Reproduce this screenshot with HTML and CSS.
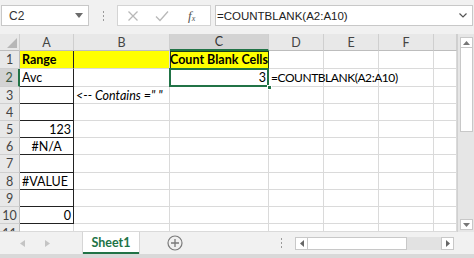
FILE: index.html
```html
<!DOCTYPE html>
<html>
<head>
<meta charset="utf-8">
<link rel="stylesheet" href="styles.css">
</head>
<body>
<div class="app">
  <div class="fbar">
    <div class="namebox"><span>C2</span><svg class="dd" width="8" height="5" viewBox="0 0 8 5"><path d="M0 0h8L4 5z" fill="#6b6b6b"/></svg></div>
    <div class="vdots"><i></i><i></i><i></i></div>
    <div class="btns">
      <svg width="12" height="12" viewBox="0 0 12 12"><path d="M1.5 1.5l9 9M10.5 1.5l-9 9" stroke="#b8b8b8" stroke-width="1.3"/></svg>
      <svg width="14" height="12" viewBox="0 0 14 12"><path d="M1 6.5l4 4L13 1.5" stroke="#b8b8b8" stroke-width="1.3" fill="none"/></svg>
      <span class="fx">f<sub>x</sub></span>
    </div>
    <div class="formula"><span>=COUNTBLANK(A2:A10)</span><svg width="8" height="5" viewBox="0 0 8 5"><path d="M0.5 0.5L4 4l3.5-3.5" stroke="#555" stroke-width="1.2" fill="none"/></svg></div>
  </div>
  <div class="main">
    <div class="grid">
      <div class="ch corner"><svg width="10" height="10" viewBox="0 0 10 10"><path d="M10 0v10H0z" fill="#b7b7b7"/></svg></div>
      <div class="ch">A</div><div class="ch">B</div><div class="ch sel">C</div><div class="ch">D</div><div class="ch">E</div><div class="ch">F</div><div class="ch"></div>

      <div class="rh">1</div><div class="c yel bold dk-r">Range</div><div class="c yel"></div><div class="c yel bold dk-box">Count Blank Cells</div><div class="c"></div><div class="c"></div><div class="c"></div><div class="c"></div>
      <div class="rh rsel">2</div><div class="c dk">Avc</div><div class="c"></div><div class="c r selcell">3<span class="handle"></span></div><div class="c ovf caps">=COUNTBLANK(A2:A10)</div><div class="c"></div><div class="c"></div><div class="c"></div>
      <div class="rh">3</div><div class="c dk"></div><div class="c ovf it">&lt;-- Contains =" "</div><div class="c"></div><div class="c"></div><div class="c"></div><div class="c"></div><div class="c"></div>
      <div class="rh">4</div><div class="c dk"></div><div class="c"></div><div class="c"></div><div class="c"></div><div class="c"></div><div class="c"></div><div class="c"></div>
      <div class="rh">5</div><div class="c dk r">123</div><div class="c"></div><div class="c"></div><div class="c"></div><div class="c"></div><div class="c"></div><div class="c"></div>
      <div class="rh">6</div><div class="c dk ctr">#N/A</div><div class="c"></div><div class="c"></div><div class="c"></div><div class="c"></div><div class="c"></div><div class="c"></div>
      <div class="rh">7</div><div class="c dk"></div><div class="c"></div><div class="c"></div><div class="c"></div><div class="c"></div><div class="c"></div><div class="c"></div>
      <div class="rh">8</div><div class="c dk">#VALUE</div><div class="c"></div><div class="c"></div><div class="c"></div><div class="c"></div><div class="c"></div><div class="c"></div>
      <div class="rh">9</div><div class="c dk"></div><div class="c"></div><div class="c"></div><div class="c"></div><div class="c"></div><div class="c"></div><div class="c"></div>
      <div class="rh">10</div><div class="c dk r">0</div><div class="c"></div><div class="c"></div><div class="c"></div><div class="c"></div><div class="c"></div><div class="c"></div>
      <div class="rh rh11"><span>11</span></div><div class="c"></div><div class="c"></div><div class="c"></div><div class="c"></div><div class="c"></div><div class="c"></div><div class="c"></div>
    </div>
    <div class="vscroll">
      <div class="arr"><svg width="7" height="4" viewBox="0 0 7 4"><path d="M0 4L3.5 0 7 4z" fill="#777"/></svg></div>
      <div class="thumb"></div>
      <div class="track"></div>
      <div class="arr"><svg width="7" height="4" viewBox="0 0 7 4"><path d="M0 0h7L3.5 4z" fill="#777"/></svg></div>
    </div>
  </div>
  <div class="tabbar">
    <div class="nav"><svg width="5" height="7" viewBox="0 0 5 7"><path d="M5 0v7L0 3.5z" fill="#c4c4c4"/></svg><svg width="5" height="7" viewBox="0 0 5 7"><path d="M0 0v7l5-3.5z" fill="#c4c4c4"/></svg></div>
    <div class="tab">Sheet1</div>
    <div class="plus"><svg width="16" height="16" viewBox="0 0 16 16"><circle cx="8" cy="8" r="7" fill="none" stroke="#7a7a7a" stroke-width="1.2"/><path d="M8 4v8M4 8h8" stroke="#7a7a7a" stroke-width="1.3"/></svg></div>
    <div class="hdots"><i></i><i></i><i></i></div>
    <div class="hscroll">
      <div class="harr"><svg width="4" height="7" viewBox="0 0 4 7"><path d="M4 0v7L0 3.5z" fill="#666"/></svg></div>
      <div class="hthumb"></div>
      <div class="htrack"></div>
      <div class="harr"><svg width="4" height="7" viewBox="0 0 4 7"><path d="M0 0v7l4-3.5z" fill="#666"/></svg></div>
    </div>
  </div>
  <div class="bottom"></div>
</div>
</body>
</html>
```
FILE: styles.css
```css
* { box-sizing: border-box; }
html, body { margin: 0; padding: 0; }
body { width: 474px; height: 258px; overflow: hidden; background: #f1f1f1; font-family: "Liberation Sans", Arial, sans-serif; }
.app { width: 474px; height: 258px; display: flex; flex-direction: column; }

.fbar { height: 34px; display: flex; align-items: flex-start; padding-top: 5px; flex: none; }
.namebox { margin-left: 1px; width: 88px; height: 21px; background: #fff; border: 1px solid #c8c8c8; display: flex; align-items: center; justify-content: space-between; padding: 0 5px 0 7px; font-size: 12px; color: #333; }
.vdots { width: 28px; height: 21px; display: flex; flex-direction: column; align-items: center; justify-content: center; gap: 2px; }
.vdots i, .hdots i { display: block; width: 1px; height: 2px; background: #9a9a9a; }
.btns { width: 94px; height: 21px; background: #fff; border: 1px solid #d4d4d4; display: flex; align-items: center; padding-left: 9px; gap: 16px; }
.fx { font-family: "Liberation Serif", serif; font-style: italic; font-size: 13px; color: #555; margin-left: 3px; }
.fx sub { font-size: 8px; vertical-align: -1px; }
.formula { margin-left: 4px; width: 258px; height: 21px; background: #fff; border: 1px solid #c8c8c8; display: flex; align-items: center; justify-content: space-between; padding: 0 5px 0 1px; font-size: 11.5px; color: #222; }

.main { display: flex; height: 198px; flex: none; }
.grid { display: grid; grid-template-columns: 20px 54px 96px 99px 55px 55px 55px 23px; grid-template-rows: 17px 18px 18px 17px 17px 17px 17px 18px 17px 17px 17px 8px; background: #fff; overflow: hidden; width: 457px; font-family: Lato, "Liberation Sans", sans-serif; }
.ch { background: #e8e8e8; border-right: 1px solid #cfcfcf; border-bottom: 1px solid #bdbdbd; font-size: 12.5px; color: #444; display: flex; align-items: center; justify-content: center; }
.ch.sel { background: #d3d3d3; border-bottom: 2px solid #217346; color: #333; }
.corner { justify-content: flex-end; align-items: flex-end; padding: 0 2px 2px 0; }
.rh { background: #e8e8e8; border-right: 1px solid #bdbdbd; border-bottom: 1px solid #cfcfcf; font-size: 12.5px; color: #444; display: flex; align-items: center; justify-content: center; overflow: hidden; }
.rh.rsel { background: #d3d3d3; border-right: 2px solid #217346; color: #3a5a45; }
.rh11 { align-items: flex-start; }
.rh11 span { margin-top: 2px; }
.c { position: relative; border-right: 1px solid #dadada; border-bottom: 1px solid #dadada; font-size: 12.5px; color: #000; display: flex; align-items: center; padding: 0 2px; white-space: nowrap; }
.c.ovf { overflow: visible; z-index: 1; }
.c.caps { font-size: 12px; letter-spacing: -0.45px; }
.c.r { justify-content: flex-end; }
.c.ctr { justify-content: center; }
.c.it { font-style: italic; }
.c.bold { font-weight: bold; }
.c.yel { background: #ffff00; }
.c.dk { border-right: 1px solid #222; border-bottom: 1px solid #222; }
.c.dk-r { border-right: 1px solid #222; }
.c.dk-box { box-shadow: inset 1px 1px 0 #1e3d1e; border-right: 1px solid #1e3d1e; border-bottom: 1px solid #1e3d1e; justify-content: center; padding: 0; }
.selcell { z-index: 2; }
.selcell::after { content: ""; position: absolute; left: -1px; top: -1px; right: -1px; bottom: -1px; border: 2px solid #217346; pointer-events: none; }
.handle { position: absolute; right: -4px; bottom: -4px; width: 5px; height: 5px; background: #217346; border: 1px solid #fff; z-index: 3; }

.vscroll { width: 17px; background: #e6e6e6; border-left: 1px solid #d0d0d0; display: flex; flex-direction: column; align-items: center; padding: 3px 0 2px; }
.arr { width: 13px; height: 11px; background: #fff; border: 1px solid #c8c8c8; display: flex; align-items: center; justify-content: center; flex: none; }
.thumb { width: 13px; height: 84px; background: #fff; border: 1px solid #c8c8c8; border-top: none; flex: none; }
.track { flex: 1; }

.tabbar { height: 22px; display: flex; align-items: stretch; flex: none; background: #f1f1f1; }
.nav { width: 83px; display: flex; align-items: center; padding-left: 20px; gap: 20px; }
.tab { width: 56px; background: #fff; border-bottom: 2px solid #217346; box-shadow: 0 0 0 1px #d6d6d6; color: #217346; font-family: Lato, "Liberation Sans", sans-serif; font-weight: bold; font-size: 12.5px; display: flex; align-items: center; justify-content: center; }
.plus { width: 70px; display: flex; align-items: center; justify-content: center; padding-left: 1px; }
.hdots { width: 86px; display: flex; flex-direction: column; align-items: flex-end; justify-content: center; gap: 2px; padding-right: 13px; }
.hscroll { display: flex; align-items: center; width: 159px; }
.harr { width: 13px; height: 13px; background: #fff; border: 1px solid #c8c8c8; display: flex; align-items: center; justify-content: center; flex: none; }
.hthumb { width: 99px; height: 13px; background: #fff; border: 1px solid #c8c8c8; border-left: none; flex: none; }
.htrack { width: 34px; height: 13px; background: #e2e2e2; flex: none; }
.bottom { flex: 1; background: #d9d9d9; }
```
